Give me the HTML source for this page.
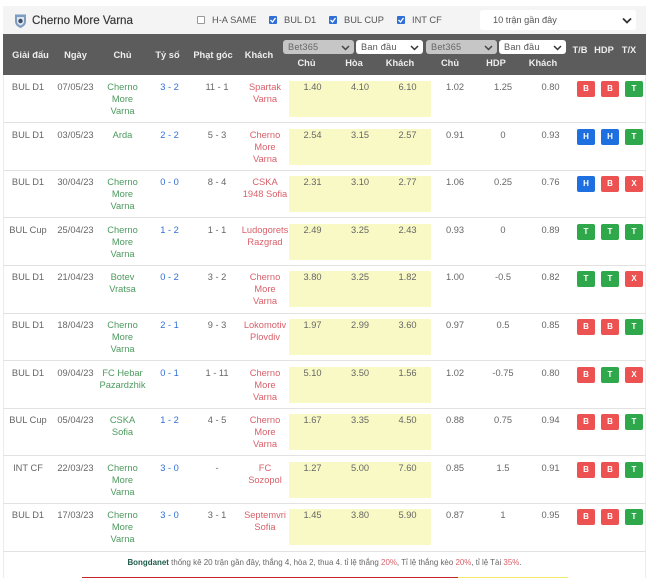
<!DOCTYPE html>
<html><head><meta charset="utf-8">
<style>
*{box-sizing:border-box}
html,body{margin:0;padding:0;background:#fff}
body{width:649px;height:578px;overflow:hidden}
#w{width:649px;height:578px;position:relative;overflow:hidden;font-family:"Liberation Sans","Noto Sans CJK SC",sans-serif;font-size:9.3px;color:#666;filter:blur(.3px)}
.a{position:absolute}
.top{left:3px;top:6px;width:643px;height:28px;background:#f4f4f4}
.head{left:3px;top:34px;width:643px;height:41px;background:#5c5c5c}
.title{left:32px;top:14px;font-size:11.6px;color:#333;line-height:14px;-webkit-text-stroke:.15px #333}
.ck{top:16px;width:8px;height:8px;border-radius:1px;background:#2f6fd6}
.ck svg{display:block}
.ck.off{background:#fff;border:1px solid #999}
.lb{top:14px;font-size:9.3px;color:#555;line-height:12px;white-space:nowrap}
.sel{left:480px;top:10px;width:156px;height:20px;background:#fff;border-radius:3px}
.h{color:#eee;font-weight:bold;font-size:9.3px;line-height:12px;text-align:center;white-space:nowrap}
.s{top:40px;height:14px;border-radius:3px;background:#fff;color:#555;font-size:9.2px;line-height:14px;padding-left:5px;letter-spacing:.2px}
.s.g{background:#c6c6c6;color:#666}
.s svg{position:absolute;right:4px;top:4.500px}
.ln{left:3px;width:643px;height:1px;background:#e2e2e2}
.y{left:289px;width:142px;background:#f9f9c6}
.c{text-align:center;line-height:12px;white-space:nowrap}
.g1{color:#4c9a5e}.r1{color:#d9606a}.b1{color:#2f6fd6}
.bd{width:18px;height:16px;border-radius:2px;color:#fff;font-weight:bold;font-size:8px;line-height:16px;text-align:center}
.R{background:#ec5252}.G{background:#2ea84a}.B{background:#1e6fe0}
.row{left:0;width:649px;height:47px}
.row .c{position:absolute;top:6px}
.row .bd{position:absolute;top:6px}
.c1{left:4px;width:48px}.c2{left:52px;width:47px}.c3{left:99px;width:47px}.c4{left:146px;width:47px}.c5{left:193px;width:48px}.c6{left:241px;width:48px}
.c7{left:289px;width:47px}.c8{left:336px;width:48px}.c9{left:384px;width:47px}.c10{left:431px;width:48px}.c11{left:479px;width:48px}.c12{left:527px;width:47px}
.b1x{left:577px}.b2x{left:601px}.b3x{left:625px}
</style></head><body><div id="w">
<div class="a" style="left:3px;top:6px;width:1px;height:572px;background:#ececec"></div>
<div class="a" style="left:645px;top:6px;width:1px;height:572px;background:#ececec"></div>
<div class="a top"></div>
<div class="a head"></div>
<svg class="a" style="left:14px;top:13px" width="13" height="16" viewBox="0 0 13 16"><path d="M1 1.500h11v7c0 3.500-3 5.500-5.500 6.500C4 14 1 12 1 8.500z" fill="#7d9cc4"/><path d="M3 4h7v4.500c0 2-2 3.500-3.500 4C5 12 3 10.500 3 8.500z" fill="#dfe6ee"/><circle cx="6.500" cy="8" r="2.200" fill="#3c4d66"/></svg>
<div class="a title">Cherno More Varna</div>
<div class="a ck off" style="left:197px"></div><div class="a lb" style="left:212px">H-A SAME</div>
<div class="a ck" style="left:269px"><svg width="8" height="8" viewBox="0 0 8 8"><path d="M1.500 4l2 2 3-4" fill="none" stroke="#fff" stroke-width="1.300"/></svg></div><div class="a lb" style="left:284px">BUL D1</div>
<div class="a ck" style="left:329px"><svg width="8" height="8" viewBox="0 0 8 8"><path d="M1.500 4l2 2 3-4" fill="none" stroke="#fff" stroke-width="1.300"/></svg></div><div class="a lb" style="left:344px">BUL CUP</div>
<div class="a ck" style="left:397px"><svg width="8" height="8" viewBox="0 0 8 8"><path d="M1.500 4l2 2 3-4" fill="none" stroke="#fff" stroke-width="1.300"/></svg></div><div class="a lb" style="left:412px">INT CF</div>
<div class="a sel"></div>
<div class="a lb" style="left:493px;top:14px;color:#555;font-size:9.200px">10 trận gần đây</div>
<svg class="a" style="left:622px;top:17px" width="10" height="7" viewBox="0 0 10 7"><path d="M1 1.500l4 4 4-4" fill="none" stroke="#333" stroke-width="1.800"/></svg>

<div class="a h" style="left:6.500px;width:48px;top:49px">Giải đấu</div>
<div class="a h" style="left:52px;width:47px;top:49px">Ngày</div>
<div class="a h" style="left:99px;width:47px;top:49px">Chủ</div>
<div class="a h" style="left:144px;width:47px;top:49px">Tỷ số</div>
<div class="a h" style="left:189px;width:48px;top:49px">Phạt góc</div>
<div class="a h" style="left:235px;width:48px;top:49px">Khách</div>
<div class="a s g" style="left:283px;width:71px">Bet365<svg width="9" height="6" viewBox="0 0 9 6"><path d="M1 1l3.500 3.500L8 1" fill="none" stroke="#444" stroke-width="1.500"/></svg></div>
<div class="a s" style="left:356px;width:67px">Ban đầu<svg width="9" height="6" viewBox="0 0 9 6"><path d="M1 1l3.500 3.500L8 1" fill="none" stroke="#333" stroke-width="1.500"/></svg></div>
<div class="a s g" style="left:426px;width:71px">Bet365<svg width="9" height="6" viewBox="0 0 9 6"><path d="M1 1l3.500 3.500L8 1" fill="none" stroke="#444" stroke-width="1.500"/></svg></div>
<div class="a s" style="left:499px;width:67px">Ban đầu<svg width="9" height="6" viewBox="0 0 9 6"><path d="M1 1l3.500 3.500L8 1" fill="none" stroke="#333" stroke-width="1.500"/></svg></div>
<div class="a h" style="left:565px;width:30px;top:44px">T/B</div>
<div class="a h" style="left:589px;width:30px;top:44px">HDP</div>
<div class="a h" style="left:614px;width:30px;top:44px">T/X</div>
<div class="a h" style="left:283px;width:47px;top:57px">Chủ</div>
<div class="a h" style="left:330px;width:48px;top:57px">Hòa</div>
<div class="a h" style="left:376.500px;width:47px;top:57px">Khách</div>
<div class="a h" style="left:426px;width:48px;top:57px">Chủ</div>
<div class="a h" style="left:472px;width:48px;top:57px">HDP</div>
<div class="a h" style="left:519px;width:48px;top:57px">Khách</div>

<div class="a row" style="top:75px"><div class="a y" style="top:6px;height:36px"></div><div class="c c1">BUL D1</div><div class="c c2">07/05/23</div><div class="c c3 g1">Cherno<br>More<br>Varna</div><div class="c c4 b1">3 - 2</div><div class="c c5">11 - 1</div><div class="c c6 r1">Spartak<br>Varna</div><div class="c c7">1.40</div><div class="c c8">4.10</div><div class="c c9">6.10</div><div class="c c10">1.02</div><div class="c c11">1.25</div><div class="c c12">0.80</div><div class="bd R b1x">B</div><div class="bd R b2x">B</div><div class="bd G b3x">T</div></div>
<div class="a ln" style="top:122px"></div>
<div class="a row" style="top:122.600px"><div class="a y" style="top:6px;height:36px"></div><div class="c c1">BUL D1</div><div class="c c2">03/05/23</div><div class="c c3 g1">Arda</div><div class="c c4 b1">2 - 2</div><div class="c c5">5 - 3</div><div class="c c6 r1">Cherno<br>More<br>Varna</div><div class="c c7">2.54</div><div class="c c8">3.15</div><div class="c c9">2.57</div><div class="c c10">0.91</div><div class="c c11">0</div><div class="c c12">0.93</div><div class="bd B b1x">H</div><div class="bd B b2x">H</div><div class="bd G b3x">T</div></div>
<div class="a ln" style="top:170px"></div>
<div class="a row" style="top:170.200px"><div class="a y" style="top:6px;height:36px"></div><div class="c c1">BUL D1</div><div class="c c2">30/04/23</div><div class="c c3 g1">Cherno<br>More<br>Varna</div><div class="c c4 b1">0 - 0</div><div class="c c5">8 - 4</div><div class="c c6 r1">CSKA<br>1948 Sofia</div><div class="c c7">2.31</div><div class="c c8">3.10</div><div class="c c9">2.77</div><div class="c c10">1.06</div><div class="c c11">0.25</div><div class="c c12">0.76</div><div class="bd B b1x">H</div><div class="bd R b2x">B</div><div class="bd R b3x">X</div></div>
<div class="a ln" style="top:217px"></div>
<div class="a row" style="top:217.800px"><div class="a y" style="top:6px;height:36px"></div><div class="c c1">BUL Cup</div><div class="c c2">25/04/23</div><div class="c c3 g1">Cherno<br>More<br>Varna</div><div class="c c4 b1">1 - 2</div><div class="c c5">1 - 1</div><div class="c c6 r1">Ludogorets<br>Razgrad</div><div class="c c7">2.49</div><div class="c c8">3.25</div><div class="c c9">2.43</div><div class="c c10">0.93</div><div class="c c11">0</div><div class="c c12">0.89</div><div class="bd G b1x">T</div><div class="bd G b2x">T</div><div class="bd G b3x">T</div></div>
<div class="a ln" style="top:265px"></div>
<div class="a row" style="top:265.400px"><div class="a y" style="top:6px;height:36px"></div><div class="c c1">BUL D1</div><div class="c c2">21/04/23</div><div class="c c3 g1">Botev<br>Vratsa</div><div class="c c4 b1">0 - 2</div><div class="c c5">3 - 2</div><div class="c c6 r1">Cherno<br>More<br>Varna</div><div class="c c7">3.80</div><div class="c c8">3.25</div><div class="c c9">1.82</div><div class="c c10">1.00</div><div class="c c11">-0.5</div><div class="c c12">0.82</div><div class="bd G b1x">T</div><div class="bd G b2x">T</div><div class="bd R b3x">X</div></div>
<div class="a ln" style="top:313px"></div>
<div class="a row" style="top:313px"><div class="a y" style="top:6px;height:36px"></div><div class="c c1">BUL D1</div><div class="c c2">18/04/23</div><div class="c c3 g1">Cherno<br>More<br>Varna</div><div class="c c4 b1">2 - 1</div><div class="c c5">9 - 3</div><div class="c c6 r1">Lokomotiv<br>Plovdiv</div><div class="c c7">1.97</div><div class="c c8">2.99</div><div class="c c9">3.60</div><div class="c c10">0.97</div><div class="c c11">0.5</div><div class="c c12">0.85</div><div class="bd R b1x">B</div><div class="bd R b2x">B</div><div class="bd G b3x">T</div></div>
<div class="a ln" style="top:360px"></div>
<div class="a row" style="top:360.600px"><div class="a y" style="top:6px;height:36px"></div><div class="c c1">BUL D1</div><div class="c c2">09/04/23</div><div class="c c3 g1">FC Hebar<br>Pazardzhik</div><div class="c c4 b1">0 - 1</div><div class="c c5">1 - 11</div><div class="c c6 r1">Cherno<br>More<br>Varna</div><div class="c c7">5.10</div><div class="c c8">3.50</div><div class="c c9">1.56</div><div class="c c10">1.02</div><div class="c c11">-0.75</div><div class="c c12">0.80</div><div class="bd R b1x">B</div><div class="bd G b2x">T</div><div class="bd R b3x">X</div></div>
<div class="a ln" style="top:408px"></div>
<div class="a row" style="top:408.200px"><div class="a y" style="top:6px;height:36px"></div><div class="c c1">BUL Cup</div><div class="c c2">05/04/23</div><div class="c c3 g1">CSKA<br>Sofia</div><div class="c c4 b1">1 - 2</div><div class="c c5">4 - 5</div><div class="c c6 r1">Cherno<br>More<br>Varna</div><div class="c c7">1.67</div><div class="c c8">3.35</div><div class="c c9">4.50</div><div class="c c10">0.88</div><div class="c c11">0.75</div><div class="c c12">0.94</div><div class="bd R b1x">B</div><div class="bd R b2x">B</div><div class="bd G b3x">T</div></div>
<div class="a ln" style="top:455px"></div>
<div class="a row" style="top:455.800px"><div class="a y" style="top:6px;height:36px"></div><div class="c c1">INT CF</div><div class="c c2">22/03/23</div><div class="c c3 g1">Cherno<br>More<br>Varna</div><div class="c c4 b1">3 - 0</div><div class="c c5">-</div><div class="c c6 r1">FC<br>Sozopol</div><div class="c c7">1.27</div><div class="c c8">5.00</div><div class="c c9">7.60</div><div class="c c10">0.85</div><div class="c c11">1.5</div><div class="c c12">0.91</div><div class="bd R b1x">B</div><div class="bd R b2x">B</div><div class="bd G b3x">T</div></div>
<div class="a ln" style="top:503px"></div>
<div class="a row" style="top:503.400px"><div class="a y" style="top:6px;height:36px"></div><div class="c c1">BUL D1</div><div class="c c2">17/03/23</div><div class="c c3 g1">Cherno<br>More<br>Varna</div><div class="c c4 b1">3 - 0</div><div class="c c5">3 - 1</div><div class="c c6 r1">Septemvri<br>Sofia</div><div class="c c7">1.45</div><div class="c c8">3.80</div><div class="c c9">5.90</div><div class="c c10">0.87</div><div class="c c11">1</div><div class="c c12">0.95</div><div class="bd R b1x">B</div><div class="bd R b2x">B</div><div class="bd G b3x">T</div></div>
<div class="a ln" style="top:551px"></div>

<div class="a" style="left:3px;width:643px;top:557px;text-align:center;font-size:7.950px;line-height:12px;color:#666;white-space:nowrap"><b style="color:#1d5a4a">Bongdanet</b> thống kê 20 trận gần đây, thắng 4, hòa 2, thua 4. tỉ lệ thắng <span style="color:#d9606a">20%</span>, Tỉ lệ thắng kèo <span style="color:#d9606a">20%</span>, tỉ lệ Tài <span style="color:#d9606a">35%</span>.</div>
<div class="a" style="left:82px;top:576.500px;width:376px;height:2px;background:#c8242c"></div>
<div class="a" style="left:458px;top:576.500px;width:110px;height:2px;background:#f5e96a"></div>
</div></body></html>
